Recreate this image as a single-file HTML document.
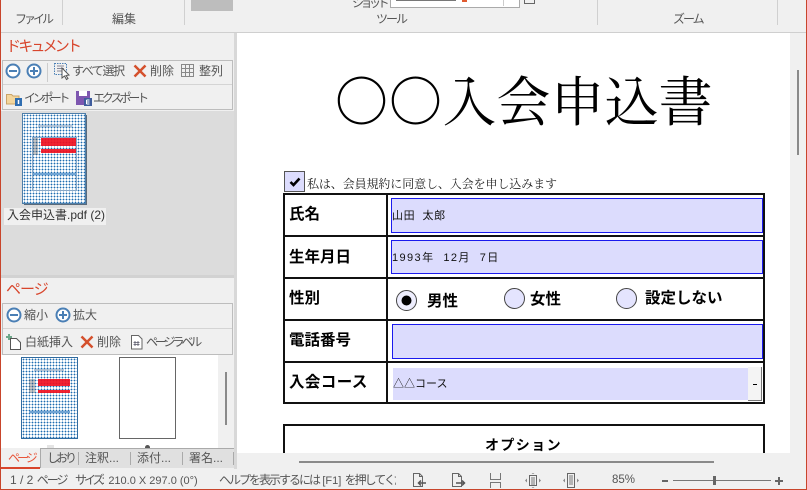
<!DOCTYPE html>
<html lang="ja"><head><meta charset="utf-8"><title>入会申込書</title>
<style>
html,body{margin:0;padding:0;width:807px;height:490px;overflow:hidden;background:#f0f0f0}
body{position:relative;font-family:"Liberation Sans","Noto Sans CJK JP",sans-serif;font-size:12px;color:#555}
.a{position:absolute}
.t{position:absolute;white-space:nowrap;line-height:1}
.b{position:absolute;background:#bdbdbd}
.k{color:#000;font-weight:bold}
.red{color:#d8452c;font-size:15px}
.field{position:absolute;background:#dcdcfd;border:1px solid #1a1aee;box-sizing:border-box}
.line{position:absolute;background:#111}
.dots{position:absolute;background-color:#fff;background-image:radial-gradient(circle at 1.5px 1.5px,#1e6cb0 .7px,#fff 1px);background-size:3px 3px}
svg{position:absolute;overflow:visible}
</style></head><body>

<!-- ribbon -->
<div class="b" style="left:191px;top:0;width:42px;height:11px"></div>
<div class="b" style="left:62px;top:0;width:1px;height:25px;background:#d0d0d0"></div>
<div class="b" style="left:184px;top:0;width:1px;height:25px;background:#d0d0d0"></div>
<div class="b" style="left:597px;top:0;width:1px;height:25px;background:#d0d0d0"></div>
<div class="b" style="left:777px;top:0;width:1px;height:25px;background:#d0d0d0"></div>
<div class="t" style="left:15px;top:13px;letter-spacing:-3px">ファイル</div>
<div class="t" style="left:112px;top:13px">編集</div>
<div class="t" style="left:376px;top:13px;letter-spacing:-2px">ツール</div>
<div class="t" style="left:673px;top:13px;letter-spacing:-2px">ズーム</div>
<div class="t" style="left:352px;top:-3px;letter-spacing:-3.500px">ショット</div>
<div class="a" style="left:390px;top:-2px;width:128px;height:8px;background:#fff;border:1px solid #aaa"></div>
<div class="a" style="left:503px;top:0;width:1px;height:6px;background:#ccc"></div>
<div class="a" style="left:524px;top:-2px;width:9px;height:4px;border:1px solid #666"></div>
<div class="a" style="left:396px;top:0;width:60px;height:1px;background:#777"></div>
<div class="a" style="left:462px;top:0;width:5px;height:2px;background:#e05a30"></div>
<div class="a" style="left:0;top:32px;width:807px;height:1px;background:#cfcfcf"></div>

<!-- left panel -->
<div class="t red" style="left:6px;top:39px;letter-spacing:-2.800px">ドキュメント</div>
<div class="a" style="left:2px;top:60px;width:231px;height:50px;border:1px solid #bdbdbd;box-sizing:border-box"></div>
<div class="a" style="left:3px;top:84px;width:229px;height:1px;background:#d4d4d4"></div>

<svg style="left:5px;top:63px" width="17" height="16"><circle cx="8" cy="8" r="6.5" fill="#fff" stroke="#4a7fb5" stroke-width="2"/><path d="M4 8h8" stroke="#4a7fb5" stroke-width="2"/></svg>
<svg style="left:26px;top:63px" width="17" height="16"><circle cx="8" cy="8" r="6.5" fill="#fff" stroke="#4a7fb5" stroke-width="2"/><path d="M4 8h8M8 4v8" stroke="#4a7fb5" stroke-width="2"/></svg>
<div class="a" style="left:47px;top:63px;width:1px;height:19px;background:#ccc"></div>
<svg style="left:54px;top:63px" width="16" height="16"><rect x="0.5" y="0.5" width="12" height="11" fill="none" stroke="#4a7fb5" stroke-dasharray="1.5 1"/><path d="M3 3h7M3 5.5h7M3 8h5" stroke="#889"/><path d="M8 5l0 10 2.5-2 2 3.500 1.500-1-2-3 3-.5z" fill="#fff" stroke="#555"/></svg>
<div class="t" style="left:72px;top:65px;letter-spacing:-1.400px">すべて選択</div>
<svg style="left:133px;top:64px" width="15" height="14"><path d="M1.500 1.500l11 11M12.500 1.500l-11 11" stroke="#d4502c" stroke-width="2.500"/></svg>
<div class="t" style="left:150px;top:65px">削除</div>
<svg style="left:181px;top:64px" width="13" height="13"><path d="M.5.500h12v12H.5zM4.500.500v12M8.500.500v12M.5 4.500h12M.5 8.500h12" fill="none" stroke="#888"/></svg>
<div class="t" style="left:199px;top:65px">整列</div>

<svg style="left:6px;top:91px" width="16" height="15"><path d="M.5 3.500h5l1.500 1.500h6v8H.5z" fill="#f4d69c" stroke="#caa468"/><rect x="9" y="7" width="7" height="8" fill="#2f6db0"/><path d="M12.500 9v4" stroke="#fff" stroke-width="1.500"/></svg>
<div class="t" style="left:24px;top:92px;letter-spacing:-3.400px">インポート</div>
<svg style="left:76px;top:91px" width="16" height="15"><rect x="0" y="0" width="14" height="14" fill="#7e57b0"/><rect x="3" y="0" width="8" height="5" fill="#fff"/><rect x="8" y="7" width="8" height="8" fill="#3f5c9c"/><path d="M10.500 9h3M10.500 11h3M10.500 13h3M10.500 9v4" stroke="#fff"/></svg>
<div class="t" style="left:93px;top:92px;letter-spacing:-3.100px">エクスポート</div>

<div class="a" style="left:1px;top:111px;width:233px;height:164px;background:#dcdcdc"></div>
<div class="a" style="left:24px;top:115px;width:63px;height:90px;background:#5a6a7a"></div>
<div class="dots" style="left:22px;top:113px;width:64px;height:91px;border:1px solid #4f7ea8;box-sizing:border-box"></div>
<div class="a" style="left:41px;top:137px;width:36px;height:9px;background:#f01020;opacity:.92"></div>
<div class="a" style="left:41px;top:149px;width:36px;height:4px;background:#f01020;opacity:.92"></div>
<div class="a" style="left:38px;top:125px;width:34px;height:2px;background:#8aa4c0;opacity:.6"></div>
<div class="a" style="left:32px;top:137px;width:6px;height:18px;background:#555;opacity:.35"></div>
<div class="a" style="left:32px;top:173px;width:45px;height:2px;background:#70a4d4"></div>
<div class="a" style="left:32px;top:137px;width:45px;height:54px;border:1px solid #88a8c8;box-sizing:border-box"></div>
<div class="a" style="left:4px;top:208px;width:102px;height:17px;background:#f0f0f0"></div>
<div class="t" style="left:7px;top:209px;color:#333">入会申込書.pdf (2)</div>

<div class="a" style="left:1px;top:275px;width:233px;height:3px;background:#d2d2d2"></div>
<div class="t red" style="left:6px;top:282px;letter-spacing:-1px">ページ</div>
<div class="a" style="left:2px;top:303px;width:231px;height:52px;border:1px solid #bdbdbd;box-sizing:border-box"></div>
<div class="a" style="left:3px;top:328px;width:229px;height:1px;background:#d4d4d4"></div>

<svg style="left:6px;top:307px" width="17" height="16"><circle cx="8" cy="8" r="6.500" fill="#fff" stroke="#4a7fb5" stroke-width="2"/><path d="M4 8h8" stroke="#4a7fb5" stroke-width="2"/></svg>
<div class="t" style="left:24px;top:309px">縮小</div>
<svg style="left:55px;top:307px" width="17" height="16"><circle cx="8" cy="8" r="6.500" fill="#fff" stroke="#4a7fb5" stroke-width="2"/><path d="M4 8h8M8 4v8" stroke="#4a7fb5" stroke-width="2"/></svg>
<div class="t" style="left:73px;top:309px">拡大</div>
<svg style="left:6px;top:334px" width="16" height="16"><path d="M4.500 4.500h6l4 4v7h-10z" fill="#fff" stroke="#555"/><path d="M3 0v6M0 3h6" stroke="#6da88a" stroke-width="2"/></svg>
<div class="t" style="left:25px;top:336px">白紙挿入</div>
<svg style="left:80px;top:335px" width="15" height="14"><path d="M1.500 1.500l11 11M12.500 1.500l-11 11" stroke="#d4502c" stroke-width="2.500"/></svg>
<div class="t" style="left:97px;top:336px">削除</div>
<svg style="left:131px;top:335px" width="12" height="15"><path d="M.5.500h7l3.500 3.500v10H.5z" fill="#fff" stroke="#666"/><path d="M4 6v5M7 6v5M2.500 7.500h6M2.500 9.500h6" stroke="#556" stroke-width=".8"/></svg>
<div class="t" style="left:146px;top:336px;letter-spacing:-3.100px">ページラベル</div>

<div class="a" style="left:1px;top:355px;width:217px;height:93px;background:#fff"></div>
<div class="dots" style="left:21px;top:357px;width:57px;height:82px;border:1px solid #2f6a9f;box-sizing:border-box"></div>
<div class="a" style="left:38px;top:379px;width:32px;height:7px;background:#f01020;opacity:.92"></div>
<div class="a" style="left:38px;top:390px;width:32px;height:3px;background:#f01020;opacity:.92"></div>
<div class="a" style="left:34px;top:369px;width:30px;height:2px;background:#8aa4c0;opacity:.6"></div>
<div class="a" style="left:29px;top:379px;width:6px;height:14px;background:#555;opacity:.35"></div>
<div class="a" style="left:29px;top:411px;width:41px;height:2px;background:#70a4d4"></div>
<div class="a" style="left:119px;top:357px;width:57px;height:82px;border:1px solid #666;box-sizing:border-box;background:#fff"></div>
<div class="a" style="left:47px;top:445px;width:7px;height:3px;background:#e4e4e4"></div>
<div class="a" style="left:145px;top:445px;width:5px;height:3px;background:#555;border-radius:3px 3px 0 0"></div>
<div class="a" style="left:218px;top:355px;width:15px;height:93px;background:#f0f0f0"></div>
<div class="a" style="left:225px;top:372px;width:2px;height:53px;background:#8a8a8a"></div>

<!-- tabs -->
<div class="a" style="left:1px;top:448px;width:39px;height:19px;background:#f0f0f0"></div>
<div class="a" style="left:1px;top:467px;width:39px;height:2px;background:#d8452c"></div>
<div class="a" style="left:40px;top:448px;width:194px;height:20px;background:#e0e0e0;border-top:1px solid #aaa;border-left:1px solid #aaa;box-sizing:border-box"></div>
<div class="t" style="left:8px;top:452px;color:#e8553a;letter-spacing:-3px">ページ</div>
<div class="t" style="left:47px;top:452px;letter-spacing:-3px">しおり</div>
<div class="t" style="left:85px;top:452px">注釈...</div>
<div class="t" style="left:137px;top:452px">添付...</div>
<div class="t" style="left:189px;top:452px">署名...</div>
<div class="a" style="left:78px;top:452px;width:1px;height:13px;background:#aaa"></div>
<div class="a" style="left:130px;top:452px;width:1px;height:13px;background:#aaa"></div>
<div class="a" style="left:182px;top:452px;width:1px;height:13px;background:#aaa"></div>
<div class="a" style="left:233px;top:452px;width:1px;height:13px;background:#aaa"></div>

<!-- document -->
<div class="a" style="left:237px;top:33px;width:553px;height:420px;background:#fff;overflow:hidden">
  <div class="t" style="left:97.500px;top:34px;font-family:'Noto Serif CJK JP','Noto Serif CJK SC',serif;font-size:54px;color:#000;line-height:64px">○○入会申込書</div>
  <div class="a" style="left:47px;top:138px;width:21px;height:21px;background:#dcdcfd;border:1px solid #555;box-sizing:border-box"></div>
  <svg style="left:52px;top:144px" width="12" height="10"><path d="M1.500 5l3 3 6-6.500" fill="none" stroke="#000" stroke-width="2.600"/></svg>
  <div class="t" style="left:70px;top:145px;font-family:'Liberation Serif','Noto Serif CJK JP',serif;font-size:12px;color:#222;letter-spacing:-.1px">私は、会員規約に同意し、入会を申し込みます</div>

  <div class="line" style="left:46px;top:160px;width:482px;height:2px"></div>
  <div class="line" style="left:46px;top:160px;width:2px;height:211px"></div>
  <div class="line" style="left:526px;top:160px;width:2px;height:211px"></div>
  <div class="line" style="left:149px;top:160px;width:2px;height:211px"></div>
  <div class="line" style="left:46px;top:202px;width:482px;height:2px"></div>
  <div class="line" style="left:46px;top:244px;width:482px;height:2px"></div>
  <div class="line" style="left:46px;top:286px;width:482px;height:2px"></div>
  <div class="line" style="left:46px;top:328px;width:482px;height:2px"></div>
  <div class="line" style="left:46px;top:369px;width:482px;height:2px"></div>

  <div class="field" style="left:154px;top:165px;width:372px;height:35px"></div>
  <div class="field" style="left:154px;top:207px;width:372px;height:34px"></div>
  <div class="field" style="left:155px;top:291px;width:371px;height:35px"></div>
  <div class="a" style="left:156px;top:335px;width:355px;height:32px;background:#dcdcfd"></div>
  <div class="a" style="left:511px;top:334px;width:14px;height:34px;background:#f4f4f4;border-right:1px solid #777;border-bottom:1px solid #777;box-sizing:border-box"></div>
  <div class="a" style="left:516px;top:351px;width:4px;height:1px;background:#000"></div>

  <div class="t k" style="left:52px;top:174px;font-size:15.500px">氏名</div>
  <div class="t k" style="left:52px;top:217px;font-size:15.500px">生年月日</div>
  <div class="t k" style="left:52px;top:258px;font-size:15.500px">性別</div>
  <div class="t k" style="left:52px;top:300px;font-size:15.500px">電話番号</div>
  <div class="t k" style="left:52px;top:342px;font-size:15.500px;letter-spacing:.4px">入会コース</div>

  <div class="t" style="left:155px;top:178px;font-size:11px;color:#111;letter-spacing:.6px">山田&nbsp;&nbsp;太郎</div>
  <div class="t" style="left:155px;top:220px;font-size:11px;color:#111;letter-spacing:1.400px">1993年&nbsp;&nbsp;12月&nbsp;&nbsp;7日</div>
  <div class="t" style="left:156px;top:346px;font-size:11px;color:#111">△△コース</div>

  <svg style="left:159px;top:257px" width="22" height="22"><circle cx="10.500" cy="10.500" r="10" fill="#eeeefe" stroke="#444"/><circle cx="10.500" cy="10.500" r="5" fill="#000"/></svg>
  <svg style="left:267px;top:255px" width="22" height="22"><circle cx="10.500" cy="10.500" r="10" fill="#e4e4fe" stroke="#444"/></svg>
  <svg style="left:379px;top:255px" width="22" height="22"><circle cx="10.500" cy="10.500" r="10" fill="#e4e4fe" stroke="#444"/></svg>
  <div class="t k" style="left:190px;top:261px;font-size:15.500px">男性</div>
  <div class="t k" style="left:293px;top:259px;font-size:15.500px">女性</div>
  <div class="t k" style="left:408px;top:258px;font-size:15.500px">設定しない</div>

  <div class="line" style="left:46px;top:391px;width:482px;height:2px"></div>
  <div class="line" style="left:46px;top:391px;width:2px;height:40px"></div>
  <div class="line" style="left:526px;top:391px;width:2px;height:40px"></div>
  <div class="t k" style="left:248px;top:405px;font-size:14px;letter-spacing:1.400px">オプション</div>
</div>

<!-- scrollbars -->
<div class="a" style="left:797px;top:70px;width:2px;height:85px;background:#8a8a8a"></div>
<div class="a" style="left:299px;top:461px;width:415px;height:2px;background:#8a8a8a"></div>

<!-- status bar -->
<div class="t" style="left:10px;top:474px">1 / 2 <span style="letter-spacing:-2px">ページ</span></div>
<div class="t" style="left:75px;top:474px"><span style="letter-spacing:-3px">サイズ</span>: <span style="font-size:11px">210.0 X 297.0 (0°)</span></div>
<div class="a" style="left:219px;top:470px;width:177px;height:18px;overflow:hidden"><div class="t" style="left:0;top:4px"><span style="letter-spacing:-2px">ヘルプを表示するには</span> <span style="font-size:11px">[F1]</span> <span style="letter-spacing:-2px">を押してください</span></div></div>

<svg style="left:413px;top:473px" width="14" height="14" fill="none"><path d="M.5.500h6l3 3v10h-9zM6.500.500v3h3" stroke="#666"/><path d="M13 10H6M8 7.500L5.500 10 8 12.500" stroke="#555" stroke-width="1.500"/></svg>
<svg style="left:452px;top:473px" width="14" height="14" fill="none"><path d="M.5.500h6l3 3v10h-9zM6.500.500v3h3" stroke="#666"/><path d="M4 10h8M10 7.500l2.500 2.500-2.500 2.500" stroke="#555" stroke-width="1.500"/></svg>
<svg style="left:490px;top:473px" width="12" height="15" fill="none"><path d="M.5 0v6.500h10V0M.5 15V9.500h10V15" stroke="#777"/></svg>
<svg style="left:525px;top:473px" width="16" height="15" fill="none"><rect x="4.500" y="2.500" width="7" height="10" stroke="#666"/><path d="M6 5h4M6 7h4M6 9h4M6 11h4" stroke="#777"/><path d="M2 5.500L0 7.500l2 2zM14 5.500l2 2-2 2zM6.500 1L8 0l1.500 1zM6.500 14L8 15l1.500-1z" fill="#888"/></svg>
<svg style="left:563px;top:473px" width="16" height="15" fill="none"><rect x="4.500" y=".5" width="7" height="14" stroke="#666"/><path d="M6 3h4M6 5h4M6 7h4M6 9h4M6 11h4" stroke="#777"/><path d="M2 5.500L0 7.500l2 2zM14 5.500l2 2-2 2z" fill="#888"/></svg>
<div class="t" style="left:612px;top:475px;font-size:11.500px">85%</div>
<div class="a" style="left:662px;top:480px;width:6px;height:2px;background:#666"></div>
<div class="a" style="left:673px;top:480px;width:98px;height:1px;background:#777"></div>
<div class="a" style="left:713px;top:476px;width:3px;height:9px;background:#666"></div>
<div class="a" style="left:775px;top:480px;width:8px;height:2px;background:#666"></div>
<div class="a" style="left:778px;top:477px;width:2px;height:8px;background:#666"></div>

<!-- window borders -->
<div class="a" style="left:0;top:0;width:1px;height:490px;background:#c8452b"></div>
<div class="a" style="left:806px;top:0;width:1px;height:490px;background:#c8452b"></div>
<div class="a" style="left:0;top:489px;width:807px;height:1px;background:#c8452b"></div>
<div class="a" style="left:234px;top:33px;width:3px;height:436px;background:#d8d8d8"></div>
</body></html>
